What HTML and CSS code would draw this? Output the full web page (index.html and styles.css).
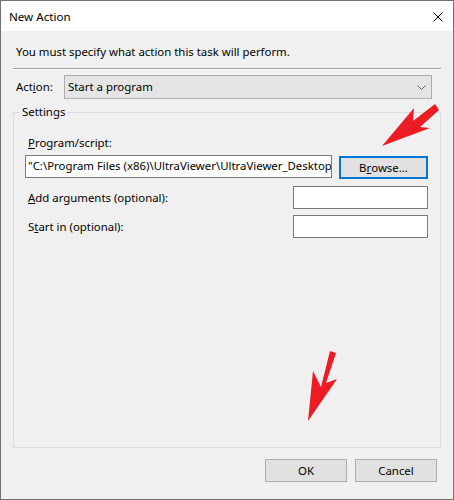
FILE: index.html
```html
<!DOCTYPE html>
<html>
<head>
<meta charset="utf-8">
<link rel="stylesheet" href="styles.css">
</head>
<body>
<div class="window">
  <div class="titlebar">
    <span class="title">New Action</span>
    <svg class="close" width="10" height="10" viewBox="0 0 10 10"><path d="M0.5 0.5 L9.5 9.5 M9.5 0.5 L0.5 9.5" stroke="#000" stroke-width="1"/></svg>
  </div>
  <div class="content">
    <p class="intro">You must specify what action this task will perform.</p>
    <div class="sep"></div>
    <div class="action-row">
      <span class="action-label">Act<u>i</u>on:</span>
      <div class="combo">
        <span>Start a program</span>
        <svg width="9" height="5" viewBox="0 0 9 5"><path d="M0.5 0.5 L4.5 4.5 L8.5 0.5" fill="none" stroke="#606060" stroke-width="1"/></svg>
      </div>
    </div>
    <fieldset class="group">
      <legend>Settings</legend>
      <div class="field-label"><u>P</u>rogram/script:</div>
      <div class="program-row">
        <div class="textbox path">"C:\Program Files (x86)\UltraViewer\UltraViewer_Desktop</div>
        <div class="btn browse">B<u>r</u>owse...</div>
      </div>
      <div class="opt-row first">
        <span class="field-label inline"><u>A</u>dd arguments (optional):</span>
        <div class="textbox small"></div>
      </div>
      <div class="opt-row">
        <span class="field-label inline">S<u>t</u>art in (optional):</span>
        <div class="textbox small"></div>
      </div>
    </fieldset>
    <div class="footer">
      <div class="btn">OK</div>
      <div class="btn">Cancel</div>
    </div>
  </div>
  <svg class="arrows" width="454" height="500" viewBox="0 0 454 500">
    <polygon points="382,146 414,108 413,121 435,104 439,110 420,127 430,128" fill="#ed1c24"/>
    <polygon points="308,421 313,371 321,387 330,351 336,353 326,383 337,379" fill="#ed1c24"/>
  </svg>
</div>
</body>
</html>
```
FILE: styles.css
```css
* { box-sizing: border-box; }
html, body { margin: 0; padding: 0; }
body {
  width: 454px;
  height: 500px;
  font-family: "Noto Sans", "Open Sans", sans-serif;
  font-size: 11.4px;
  line-height: 16px;
  color: #000;
  background: #f0f0f0;
}
u { text-decoration: underline; text-underline-offset: 1px; }
.window {
  position: relative;
  width: 454px;
  height: 500px;
  border: 1px solid #707070;
  display: flex;
  flex-direction: column;
  background: #f0f0f0;
}
.titlebar {
  height: 30px;
  background: #fff;
  display: flex;
  align-items: center;
  justify-content: space-between;
  padding: 1px 10px 0 8px;
}
.title { font-size: 11.6px; }
.close { display: block; }
.content {
  flex: 1;
  display: flex;
  flex-direction: column;
  padding: 13px 12px 17px 12px;
}
.intro { margin: 0; padding-left: 3px; }
.sep {
  margin-top: 8px;
  height: 2px;
  border-top: 1px solid #a0a0a0;
  border-bottom: 1px solid #fff;
}
.action-row {
  display: flex;
  align-items: center;
  margin-top: 5px;
  padding: 0 9px 0 3px;
}
.action-label { width: 48px; }
.combo {
  flex: 1;
  height: 24px;
  background: #e5e5e5;
  border: 1px solid #adadad;
  display: flex;
  align-items: center;
  justify-content: space-between;
  padding: 0 5px 0 3px;
}
.group {
  flex: 1;
  margin: 5px 0 0 0;
  border: 1px solid #dcdcdc;
  padding: 15px 12px 0 11px;
  min-width: 0;
}
.group legend {
  padding: 0 2px;
  margin-left: -5px;
  line-height: 16px;
}
.field-label { padding-left: 3px; }
.program-row {
  display: flex;
  align-items: flex-start;
  margin-top: 4px;
}
.textbox {
  background: #fff;
  border: 1px solid #7a7a7a;
  height: 23px;
}
.path {
  width: 307px;
  padding: 2px 0 0 2px;
  white-space: nowrap;
  overflow: hidden;
}
.btn {
  background: #e1e1e1;
  border: 1px solid #adadad;
  height: 23px;
  width: 82px;
  display: flex;
  align-items: center;
  justify-content: center;
}
.browse {
  margin-left: 7px;
  margin-top: 1px;
  width: 89px;
  border: 2px solid #0078d7;
}
.opt-row {
  display: flex;
  align-items: center;
  justify-content: space-between;
  margin-top: 6px;
}
.opt-row.first { margin-top: 7px; }
.small { width: 135px; }
.footer {
  display: flex;
  justify-content: flex-end;
  gap: 8px;
  margin-top: 11px;
  padding-right: 4px;
}
.arrows {
  position: absolute;
  left: -1px;
  top: -1px;
  pointer-events: none;
}
```
